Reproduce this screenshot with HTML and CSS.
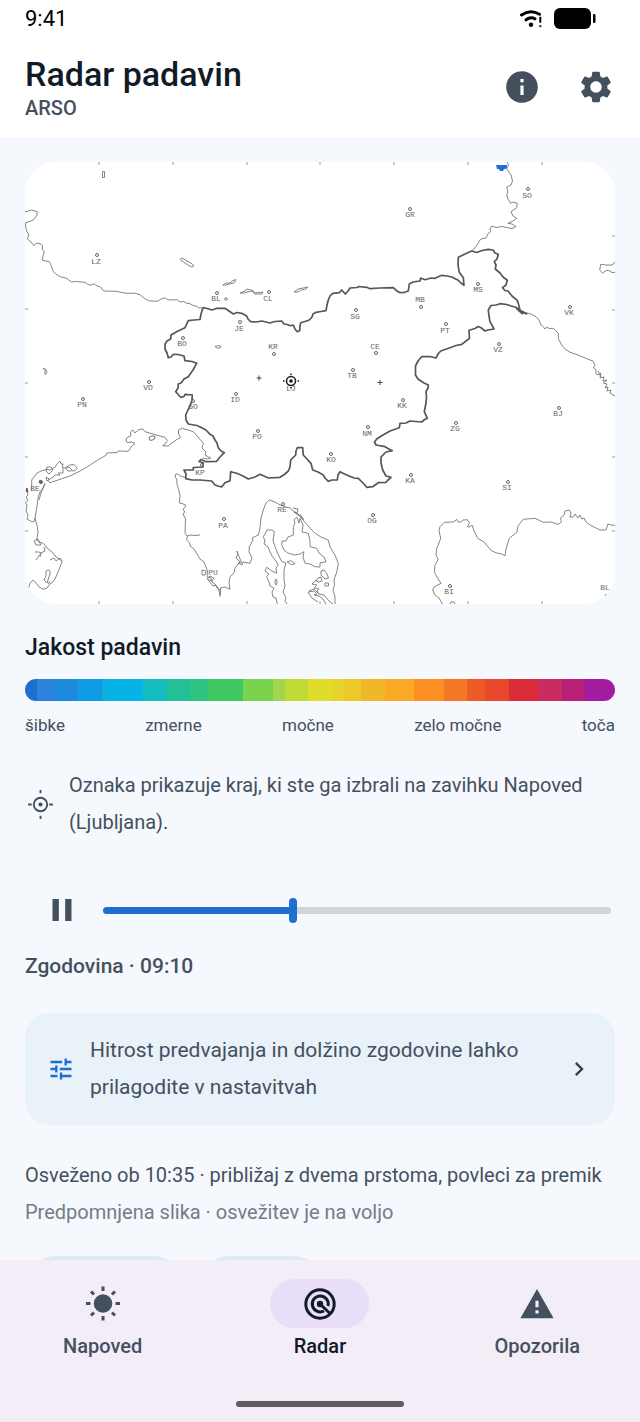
FILE: index.html
```html
<!DOCTYPE html>
<html lang="sl">
<head>
    <meta charset="UTF-8">
    <meta name="viewport" content="width=device-width, initial-scale=1.0">
    <title>Radar padavin</title>
    <link rel="stylesheet" href="styles.css">
</head>
<body>
    <div class="status-bar">
        <span class="clock">9:41</span>
        <div class="status-icons">
            <svg width="24" height="18" viewBox="0 0 24 18">
                <path d="M2.500 5Q11 -1 20.500 4.200" fill="none" stroke="#000" stroke-width="3" stroke-linecap="round"/>
                <path d="M7 9.800Q11.500 6.500 16 8.800" fill="none" stroke="#000" stroke-width="3" stroke-linecap="round"/>
                <circle cx="12" cy="14.800" r="2.200"/>
                <path d="M20 6.500h2.600v6.500h-2.600zM20 15h2.600v2.300h-2.600z" stroke="#fff" stroke-width="0.600"/>
            </svg>
            <svg width="42" height="21" viewBox="0 0 42 21">
                <rect width="37" height="21" rx="6"/>
                <rect x="39" y="6" width="2.500" height="9" rx="1"/>
            </svg>
        </div>
    </div>

    <header class="header">
        <div class="titles">
            <h1>Radar padavin</h1>
            <p>ARSO</p>
        </div>
        <button class="icon-button" aria-label="Informacije">
            <svg width="38" height="38" viewBox="0 0 24 24"><path d="M12 2C6.480 2 2 6.480 2 12s4.480 10 10 10 10-4.480 10-10S17.520 2 12 2zm1 15h-2v-6h2v6zm0-8h-2V7h2v2z"/></svg>
        </button>
        <button class="icon-button" aria-label="Nastavitve">
            <svg width="38" height="38" viewBox="0 0 24 24"><path d="M19.140 12.940c.04-.3.060-.61.060-.94 0-.32-.02-.64-.07-.94l2.030-1.580c.18-.14.230-.41.120-.61l-1.920-3.320c-.12-.22-.37-.29-.59-.22l-2.390.96c-.5-.38-1.030-.7-1.620-.94l-.36-2.540c-.04-.24-.24-.41-.48-.41h-3.840c-.24 0-.43.170-.47.410l-.36 2.540c-.59.240-1.130.570-1.620.940l-2.390-.96c-.22-.08-.47 0-.59.220L2.740 8.870c-.12.210-.08.470.120.610l2.030 1.580c-.05.3-.09.630-.09.940s.020.640.070.940l-2.030 1.580c-.18.140-.23.410-.12.610l1.920 3.320c.12.220.37.290.59.220l2.390-.96c.5.380 1.030.7 1.620.940l.36 2.540c.05.240.24.410.48.410h3.840c.24 0 .44-.17.47-.41l.36-2.540c.59-.24 1.130-.56 1.620-.94l2.390.96c.22.080.47 0 .59-.22l1.920-3.320c.12-.22.070-.47-.12-.61l-2.010-1.580zM12 15.600c-1.980 0-3.600-1.620-3.600-3.600s1.620-3.600 3.600-3.600 3.600 1.620 3.600 3.600-1.620 3.600-3.600 3.600z"/></svg>
        </button>
    </header>

    <main class="content">
        <svg class="map" viewBox="25 162 590 442" role="img" aria-label="Radarska slika">
            <rect class="paper" x="25" y="162" width="590" height="442"/>
            <path class="tick" d="M99 162v3M173 162v3M247 162v3M320 162v3M394 162v3M468 162v3M542 162v3M99 601v3M173 601v3M247 601v3M320 601v3M394 601v3M468 601v3M542 601v3M25 309h3M25 383h3M25 457h3M25 531h3M612 236h3M612 310h3M612 383h3M612 457h3M612 531h3"/>

            <!-- neighbouring borders -->
            <path class="thin" d="M25 212L31.700 210L37.300 211.700L37 215L34 219.300L31 221L25.700 222.700L25.500 226L26.700 231L29 235L27.300 239L31 242L34 245.700L36.700 243L41 244L42.700 245.700L42 249L44.300 251.700L43 256L42.300 260.300L49.300 261.700L51 265L53.300 271.700L56 274L60 276.700L66 278L71.700 282L76 281.500L85 282.300L88 284.500L91 285.300L94 283.700L97 286L100 286.700L103.700 291L116.700 291.300L124 293L130 293.300L134 293L140 294.700L144 298L148.300 300.700L157.300 301.300L161 299L165.300 297.700L167 299.500L170 300L177.300 299.700L180 302L184 301.500L186 303L190 303.700L193 305.500L196.700 306.300L199 308L203 307.700"/>
            <path class="thin" d="M507.300 162L508.500 165L506.700 169L509 172L511 175L512.500 181L511 185L506.700 187.300L508 192L506.700 195L508 199L510.500 203.300L513 202L517.300 203.300L516.700 207.700L511 211.700L513 216L516.700 218.300L513 221L508 223.300L512 224L516 226.700L512 228.500L506.700 227.500L502 226.500L496 227.500L491.700 226L490 229L490.500 232L488.300 233.300L486 238L480.700 239L477 245L472.300 251"/>
            <path class="thin" d="M526.700 313L531 314L536 316.700L539 320L541 325L543.300 326.700L545 329L547 327L549 328.500L553.300 328.300L558.300 333.300L558.500 339L561.700 345L565 349L570 352.300L578 355L590 360L593 361L595 365L593.500 368L596 370L595.700 373.300L598 375L601 373L600 378L604 377L603 381L607 380L603.300 383L607 384L605 388L608 387L607 391L611 390L610 393L615 396M601 377L598 371"/>
            <path class="thin" d="M615 261.700L612.700 265L606 265L600.700 264.300L599.700 270L602.700 273.300L605 271L608.300 270.300L612 272.500L615 272.300"/>
            <path class="thin" d="M442.300 604L439 598L435 595L432.700 590L434 587L441 583.300L437 577L434.300 571.700L435 565L438.300 559.300L436 555L436.700 548.300L439 543L440.700 538.300L439 531L440 526.700L444.300 522.300L453 522L455 521L456.700 519.300L458 522L461 522L463 520L467.300 519.700L469.500 523L467.500 526.700L470 527L472 525L474 531L477.700 538.300L484 542L491.700 551L497 553L502 554L505 556L506 549L509.300 538.300L512 536L516.700 532.700L518 526L523.300 519.300L535 518.300L543.300 522.300L551 522L558.300 524.300L561.500 522L560.500 518L564 515L565 511L569.300 510L571 513L570 517L573 517L575 514L578 518L580 515L581.700 519L584 518L586 522L590 525L600 530L606 530L608 524L611 525L615 525.300"/>
            <path class="thin" d="M450 604l1-2h3l1 2"/>

            <!-- northern Adriatic -->
            <path class="thin" d="M50 482.700L61 479L70 476L78 472L86.700 467.300L96 461L106 455.300L107 453L117 452.500L118 451L128.300 451.300L131 447L135 443.300L131 442L127.300 442.700L126 440L127 437.500L130.700 436L130.700 431.700L133 430L135 433L139 429.500L143 429L145 431.700L153 434L160 436L165 437.300L167.300 440.700L165 444L162.700 445.700L168 446L172 443L176 440L180.700 437.500L178.500 434L178.500 430L182.300 428.300L188 430L193.300 431.700L198 437L203.300 443.300L202 448L206 452L205 455L210.700 458L207 459L202.700 458"/>
            <ellipse class="thin" cx="152" cy="438" rx="3" ry="2" transform="rotate(-25 152 438)"/>
            <path class="thin" d="M31.700 490L31.700 480L36.700 473.300L41 471L46.700 469.300L50 470L55 467.300L57 464L60 461L61 464L63.300 464L62 467L65 468L70 465L74 464.500L77.300 468.300L75 470.700L68 471L66 468.500L69 467L72 470M63 468L63 473L58 473L60 475L55 475L52 478L48 480L50 483M47 467l4 0 2 3-4 4-3-3zM46 477l3 2-2 2z"/>
            <path class="thin" d="M45 483.300L43 488L40 492L38.300 496.700L37 506L35.500 515L35 518.300L34 521.700L31.700 521.700L27 519L28 515L26 511L27 505L25.500 503L28 500L26 497L28 495L27 491M45 484L41 493L39 500M35 518L37.300 526.700L38 532L36.700 540L39 542L43.300 543.300L47 548L51.700 551.700L56 557L62.300 561L60 567L58 572L55 579L50.700 584M28.300 589.300L30 583L33.300 580L36 583L39 587L43.300 589.300L47 588L50.700 583M35 552l4 0 2 1-5 7M34 541l4-2 3 6-5 0zM44 547l1 4-4 2-1 4M46 571q5-3 4 3l-3 9-3-3 2-4zM48 584l2-3M50 560l4-2 2 3 4-3 2 3"/>
            <path class="bold" d="M40 480l2 1.500-1 2-2-1zM27 488l1 4-2-1z"/>

            <!-- Istria and the islands -->
            <path class="thin" d="M185.700 477.500L180 476L178 474L175.700 474.300L175 477L176.700 479L177 484L178.300 488.300L180 495L179.500 503L185 504.500L185.500 507L183 509L184.700 512L183 514L185.500 519L185 533.300L187.500 536.700L186.500 540L190 543.300L190 546L194 549L197 554L200 559L204 562L206 567L207.500 571L207 576.700L211 578L212 582L215 584L217 588L220 590M187 536L191 535L195 535.500L200 535M208.300 580L213 586L216 585L219 590L220 597M220.500 588V595M220 588.300L225 587L230 589.300L229 583L230 576.700L234 573L235 568L240 561.700L236 558L238 554L236.700 551L241.700 562.700L238 563L242 565L243 562L250 563.300L252 558L249 552L249.300 546.700L253 540L252 538L258.300 535L260 528L261 518L263.300 510L266 503L269.300 500L275 502L280 505L286 507L290 508L292 510L297.300 513.300L303 520L309 527L315 533.300L321 537L328.300 540L330 547L335 555L338.300 563.300L337 571L334 580L334.500 585L333 590L335 597L335 604"/>
            <path class="thin" d="M202 570l4 1-1 4-3 0zM207 579l3-3 4 2-2 3zM293 508l5 1-1 4-3-1 5 4"/>
            <path class="thin" d="M271.700 530L267 530L265 534L263.300 536.700L265 541L264 544L268 547L270 551.700L272 556L276 561L278.300 565L276 568L276.700 573.300L272 571L266.700 567.300L265 571L269 574L266.700 576.700L269 582L270 586L274 588.300L272 592L273 597L276 598L277.300 604M271.700 530L274.500 531.700L273 540L275 546.700L278 554L281.700 561.700L286 563L284 570L284 580L285 586L283 592L286 598L285 601L287.300 604"/>
            <path class="thin" d="M287 562q5-3 8 2-3 2-8-2z"/>
            <ellipse class="thin" cx="276" cy="582" rx="1" ry="3"/>
            <path class="thin" d="M296.700 517L294 520L295 523L293.300 526.700L293.300 535L288 537L286 541L282 541L281.700 545L284 550L287.300 552.700L294 555L300 554L304 551.700L303 557L305 563.300L310 564L315 566.700L320 567L320 563L326 561.700L324 557L319 553L316.700 548.300L310 546.700L310 541L308.300 533.300L302 532L303 525L300 518.300L299 523L296.700 517M297 513L303 519M300 514L304 520"/>
            <path class="thin" d="M321 571l3-1 3 4 1.500 4-3.500 1-4-4zM325 583h3.500v3h-3.500zM318 578l3-1 1 4-3 1-3-1zM316 580l-4 4 5 1-3 3 5 1-2 2 2 3M308 592l6-1 3 3-3 1 5 1 4 3 3 5M309 591l5-2 5 5 5 1 5 6 4 3M308 592l4 6 6 4"/>

            <!-- lakes -->
            <path class="thin" d="M180 259.500L182 258L187 261L191 263L194 266L192 267L187 264.500zM222.700 285L226 283L230 283L232 281L236 279.500L234 283L229 284L226 285zM240 293L245 291L247 289L253 290.500L254 293L263 292L262 294L255 294L252 291L247 292L244 293zM294 292L298 289L303 288L308 287L306 289L301 290L298 292zM215 346.500l4-1 2 1-1 1.500-3 0zM102.500 171.500l2 0v6l-2 0zM43 368l3 1.500 1 3-2 2v-4z"/>
            <circle class="thin" cx="226" cy="299" r="1.300"/>

            <!-- national border -->
            <path class="border" d="M203 307.700L207 308.500L212 310L216.700 308.300L225 308.300L229 311L233.300 314L237 312.500L241.700 313.300L246.700 316L248 319L250.700 321.700L256 322L261.700 321L266 322L270 323L275 321.500L281.700 321L284 324L287 324.500L290.700 325.700L293.300 325L295 329L297.300 331.700L299.700 330.700L300 326L300.700 322.700L305 321.500L309.300 320L312 317L313 314L316 312.300L321 311.500L326 310.700L327 305L328.300 300L330 296L332.700 293.300L339.300 292.700L341.700 290L345.300 294L348 291L350 288L357 287.500L359 286.500L366.700 287.300L370 288.700L380 288L393.300 287.700L397 291L400 292.700L404 292.500L408.300 291L409.300 284L413 282L420 281L420.700 278L425 279.700L431 278L435 278.300L441.700 275.300L447 276L451.700 277L458.300 280.300L461 283L464 285.300L463.300 277.700L459.300 272.300L458 265L458.300 257.300L465 254L471.700 251L476.700 252.500L482 250.500L488.300 249.300L493 250L495 253L498.300 254.300L497 259L494.300 261.700L496 265L495.300 269L500 273L503.300 277.300L507.300 280.300L506 285L502.500 287.700L505 290.500L508 291L512 296L517.300 300.300L519 306L520 310.300L526.700 313.700L522 312L516 307.300L511 306L506.700 304.500L500 303.700L496 305L491 305.500L488.300 310L489 316L490 321.700L494 329L488 330L485 331L481 327.700L478 326.500L475 328.500L469 330.300L469.500 338.300L466 341L461.700 344.300L456 345.500L450 347.700L440.700 351L438 354L436 358L430 356.500L421.700 356.700L418 361L415.500 366L415.500 375L418 379L424 383L428.300 385L428 388L426 391.700L426.500 397L426 403L424.300 411.700L427.300 418.300L424 420L421.700 422L410 421L406 423L400 423.300L399.300 427.700L390 431L383 435L376.700 439L374.500 442L376 445L385 446.700L388 448.500L392.300 450.700L386 452L381 457L381 463L382.700 470L386 476L391 477.300L388 480L386 482.300L378.300 482.700L372.700 486.700L366.700 487.300L364 484L358.300 478.300L354 478L346.700 475L340 471.700L338 475L337.300 480L332 480L328.300 481.300L325 478L323.300 475L318 472L312.700 470L311 463.300L306 458L303.300 455L302.700 447.700L297.300 447.700L296 451L295.700 455L290.700 460L290 467L288.300 471L285 474L280 477.300L268.300 478L260 474.300L255 477L248.300 479L243 476L236.700 473.300L230.700 471.700L230 480.700L225 482.700L221.700 487L218 486L215 485L211.700 481L200 480L192 480L185.700 478.700L186 474L184 470L193.300 470L193.300 467.500L203 467L203.300 463L199 461.500L201 459.500L206 461.700L216.700 461.300L220 457L224.300 452.700L221 451L218.300 447.700L217 443L215 440L213 436L210 434.300L206 430L201.700 427.700L197 425.500L188.300 424L186 420L185.700 415L188 410L190 406L192 400L192.300 395L185 394.300L184 396.500L180.700 397.300L175.700 391.700L178 388L178.300 384L181 383L184 379L188.300 376.700L193 370L196.700 363.300L192 361.500L185 360.700L184 356L178 354.500L173.300 354.300L171 357L168.300 357.700L167 353L165 349L165 344.300L167 341L170.700 339L171 335L178 331L185 327.700L188.300 320.700L194 320L200 319.500L201 314L203 307.700"/>
            <path class="border" d="M516 308L520 311L527 314M518 310L523 314"/>

            <path class="rain" d="M496 165h11v2l-1 2h-2l-1 2h-3l-1-2h-2z"/>

            <!-- places -->
            <g class="dots">
                <circle cx="410" cy="209" r="1.500"/><circle cx="528" cy="189" r="1.500"/><circle cx="97" cy="255" r="1.500"/><circle cx="217" cy="293" r="1.500"/><circle cx="269" cy="292" r="1.500"/>
                <circle cx="240" cy="322" r="1.500"/><circle cx="356" cy="310" r="1.500"/><circle cx="478" cy="284" r="1.500"/><circle cx="570" cy="307" r="1.500"/><circle cx="183" cy="338" r="1.500"/>
                <circle cx="274" cy="354" r="1.500"/><circle cx="376" cy="353" r="1.500"/><circle cx="421" cy="307" r="1.500"/><circle cx="446" cy="324" r="1.500"/><circle cx="499" cy="344" r="1.500"/>
                <circle cx="353" cy="370" r="1.500"/><circle cx="236" cy="394" r="1.500"/><circle cx="403" cy="400" r="1.500"/><circle cx="83" cy="399" r="1.500"/><circle cx="149" cy="382" r="1.500"/>
                <circle cx="193" cy="401" r="1.500"/><circle cx="368" cy="427" r="1.500"/><circle cx="258" cy="431" r="1.500"/><circle cx="331" cy="454" r="1.500"/><circle cx="202" cy="465" r="1.500"/>
                <circle cx="456" cy="423" r="1.500"/><circle cx="559" cy="408" r="1.500"/><circle cx="508" cy="482" r="1.500"/><circle cx="411" cy="475" r="1.500"/><circle cx="373" cy="515" r="1.500"/>
                <circle cx="224" cy="519" r="1.500"/><circle cx="283" cy="504" r="1.500"/><circle cx="450" cy="586" r="1.500"/><circle cx="41" cy="482" r="1.500"/><path d="M605 596q0-2 2-1.500"/>
            </g>
            <g class="places">
                <text x="410" y="217">GR</text><text x="527" y="198">SO</text><text x="96" y="264">LZ</text><text x="216" y="301">BL</text><text x="268" y="301">CL</text>
                <text x="239" y="331">JE</text><text x="355" y="319">SG</text><text x="478" y="292">MS</text><text x="569" y="315">VK</text><text x="182" y="346">BO</text>
                <text x="273" y="349">KR</text><text x="375" y="349">CE</text><text x="420" y="302">MB</text><text x="445" y="333">PT</text><text x="498" y="352">VZ</text>
                <text x="352" y="378">TB</text><text x="235" y="402">ID</text><text x="402" y="408">KK</text><text x="82" y="407">PN</text><text x="148" y="390">VD</text>
                <text x="193" y="409">GO</text><text x="291" y="391">LJ</text><text x="367" y="436">NM</text><text x="257" y="439">PO</text><text x="331" y="462">KO</text>
                <text x="200" y="475">KP</text><text x="455" y="431">ZG</text><text x="558" y="416">BJ</text><text x="507" y="490">SI</text><text x="410" y="483">KA</text>
                <text x="372" y="523">OG</text><text x="223" y="528">PA</text><text x="282" y="512">RE</text><text x="213" y="575">PU</text><text x="449" y="594">BI</text>
                <text x="605" y="590">BL</text><text x="35" y="491">BE</text>
            </g>
            <path class="cross" d="M259 375.500v5M256.500 378h5M380 380v5M377.500 382.500h5"/>
            <g class="marker">
                <circle cx="291" cy="381" r="4.500"/>
                <circle class="marker-dot" cx="291" cy="381" r="1.800"/>
                <path d="M291 373.500v1.500M291 387v1.500M283 381h1.500M297.500 381h1.500"/>
            </g>
        </svg>

        <section class="legend">
            <h2>Jakost padavin</h2>
            <div class="scale"></div>
            <div class="scale-labels">
                <span>šibke</span>
                <span>zmerne</span>
                <span>močne</span>
                <span>zelo močne</span>
                <span>toča</span>
            </div>
        </section>

        <div class="note">
            <svg width="31" height="31" viewBox="0 0 30 30" fill="none" stroke="#44505e" stroke-width="1.800">
                <circle cx="15" cy="15" r="6.500"/>
                <circle cx="15" cy="15" r="2" fill="#44505e" stroke="none"/>
                <path d="M15 1v3M15 26v3M3 15h3.500M23.500 15h3.500"/>
            </svg>
            <p>Oznaka prikazuje kraj, ki ste ga izbrali na zavihku Napoved (Ljubljana).</p>
        </div>

        <div class="player">
            <button class="icon-button" aria-label="Premor">
                <svg width="38" height="38" viewBox="0 0 24 24"><path d="M6 19h4V5H6v14zm8-14v14h4V5h-4z"/></svg>
            </button>
            <input class="timeline" type="range" min="0" max="51" value="19" aria-label="Čas slike">
        </div>
        <p class="frame-time">Zgodovina · 09:10</p>

        <button class="hint">
            <svg width="28" height="28" viewBox="0 0 24 24" fill="#1d6fd2"><path d="M3 17v2h6v-2H3zM3 5v2h10V5H3zm10 16v-2h8v-2h-8v-2h-2v6h2zM7 9v2H3v2h4v2h2V9H7zm14 4v-2H11v2h10zm-6-4h2V7h4V5h-4V3h-2v6z"/></svg>
            <span>Hitrost predvajanja in dolžino zgodovine lahko prilagodite v nastavitvah</span>
            <svg width="28" height="28" viewBox="0 0 24 24" fill="#35414e"><path d="M10 6L8.590 7.410 13.170 12l-4.580 4.590L10 18l6-6z"/></svg>
        </button>

        <div class="info">
            <p>Osveženo ob 10:35 · približaj z dvema prstoma, povleci za premik</p>
            <p class="cached">Predpomnjena slika · osvežitev je na voljo</p>
        </div>

        <div class="chips">
            <button class="chip chip-wide" aria-label="Osveži"></button>
            <button class="chip" aria-label="Deli"></button>
        </div>
    </main>

    <nav class="tabs">
        <a class="tab" href="#napoved">
            <span class="tab-icon">
                <svg width="38" height="38" viewBox="0 0 38 38" fill="#44505e">
                    <circle cx="19" cy="18.500" r="9.300"/>
                    <path d="M19 1.500v4.500M19 31v4.500M2 18.500h4.500M31.500 18.500h4.500M7 6.500l3 3M28 27.500l3 3M31 6.500l-3 3M10 27.500l-3 3" stroke="#44505e" stroke-width="3"/>
                </svg>
            </span>
            Napoved
        </a>
        <a class="tab active" href="#radar">
            <span class="tab-icon">
                <svg width="38" height="38" viewBox="0 0 38 38" fill="none" stroke="#111b27" stroke-width="3">
                    <circle cx="19" cy="19" r="14.200"/>
                    <path d="M23 26a8 8 0 1 1 4-5"/>
                    <circle cx="19" cy="19" r="3.200" fill="#111b27" stroke="none"/>
                    <path d="M19 19l10 9.500"/>
                </svg>
            </span>
            Radar
        </a>
        <a class="tab" href="#opozorila">
            <span class="tab-icon">
                <svg width="38" height="38" viewBox="0 0 24 24" fill="#44505e"><path d="M1.500 21h21L12 2.500 1.500 21zm11.500-3h-2v-2h2v2zm0-4h-2v-4h2v4z"/></svg>
            </span>
            Opozorila
        </a>
        <div class="home-bar"></div>
    </nav>
</body>
</html>
```
FILE: styles.css
```css
* {
    box-sizing: border-box;
}
body {
    margin: 0;
    height: 100vh;
    display: flex;
    flex-direction: column;
    background: #f5f8fd;
    color: #44505e;
    font-family: Roboto, "Liberation Sans", sans-serif;
    font-size: 20px;
    line-height: 37px;
    overflow: hidden;
}
h1, h2, p {
    margin: 0;
}
button {
    border: none;
    padding: 0;
    font: inherit;
    color: inherit;
    cursor: pointer;
}
svg {
    display: block;
    flex-shrink: 0;
}

/* Status bar and header */
.status-bar {
    display: flex;
    justify-content: space-between;
    align-items: center;
    height: 37px;
    padding: 0 44px 0 25px;
    background: #fff;
}
.clock {
    color: #000;
    font-size: 22px;
}
.status-icons {
    display: flex;
    align-items: center;
    gap: 11px;
}
.header {
    display: flex;
    align-items: center;
    gap: 24px;
    height: 100px;
    padding: 0 19px 0 25px;
    background: #fff;
}
.titles {
    flex: 1;
}
.titles h1 {
    color: #111b27;
    font-size: 34px;
    font-weight: 500;
    line-height: 38px;
}
.titles p {
    margin-top: 4px;
    font-size: 20px;
    font-weight: 500;
    line-height: 23px;
}
.icon-button {
    display: flex;
    align-items: center;
    justify-content: center;
    width: 50px;
    height: 50px;
    background: none;
}
.icon-button svg {
    fill: #44505e;
}

/* Scrolling content */
.content {
    flex: 1;
    min-height: 0;
    overflow: hidden;
    padding: 25px 25px 0;
}

/* Radar map */
.map {
    width: 100%;
    height: auto;
    border-radius: 31px;
}
.paper {
    fill: #fff;
}
.tick {
    fill: none;
    stroke: #999;
}
.thin {
    fill: none;
    stroke: #777;
    stroke-width: 0.9;
}
.bold {
    fill: #777;
    stroke: #555;
}
.border {
    fill: none;
    stroke: #56565a;
    stroke-width: 1.7;
    stroke-linejoin: round;
}
.rain {
    fill: #1d6fd2;
}
.dots {
    fill: none;
    stroke: #666;
}
.places {
    fill: #666;
    font-family: "Liberation Mono", monospace;
    font-size: 8px;
    text-anchor: middle;
}
.cross {
    fill: none;
    stroke: #444;
}
.marker {
    fill: none;
    stroke: #111b27;
    stroke-width: 1.5;
}
.marker-dot {
    fill: #111b27;
    stroke: none;
}

/* Legend */
.legend {
    padding-top: 25px;
}
.legend h2 {
    color: #111b27;
    font-size: 23px;
    font-weight: 500;
}
.scale {
    height: 22px;
    margin-top: 13px;
    border-radius: 11px;
    background: linear-gradient(90deg,
        #1f6fd0 0 2%, #2d82dc 0 5%, #1c8bdc 0 9%, #109ce4 0 13%, #0dafe0 0 14%,
        #05b4e6 0 20%, #15bcc0 0 24%, #22c096 0 28%, #2ec380 0 31%, #40c962 0 37%,
        #7ad34c 0 42%, #a2d452 0 44%, #c0da38 0 48%, #e0dc2c 0 52%, #e8d22c 0 54%,
        #ecc828 0 57%, #f0b828 0 61%, #faaa24 0 66%, #fc9024 0 71%, #f47826 0 75%,
        #ee5a28 0 78%, #e8482c 0 82%, #dc2c38 0 87%, #c82c60 0 91%, #b82078 0 95%,
        #a21ca0 0);
}
.scale-labels {
    display: flex;
    justify-content: space-between;
    margin-top: 12px;
    font-size: 17px;
    line-height: 25px;
}

.note {
    display: flex;
    align-items: center;
    gap: 13px;
    margin-top: 29px;
}

/* Playback */
.player {
    display: flex;
    align-items: center;
    gap: 16px;
    margin-top: 44px;
    padding: 0 4px 0 12px;
}
.timeline {
    flex: 1;
    min-width: 0;
    height: 25px;
    margin: 0;
    appearance: none;
    background: none;
}
.timeline::-webkit-slider-runnable-track {
    height: 7px;
    border-radius: 4px;
    background: linear-gradient(90deg, #1d6fd2 37%, #d1d4d9 0);
}
.timeline::-webkit-slider-thumb {
    appearance: none;
    width: 8px;
    height: 25px;
    margin-top: -9px;
    border-radius: 4px;
    background: #1d6fd2;
}
.frame-time {
    margin-top: 13px;
    font-size: 21px;
    font-weight: 500;
}

/* Settings hint */
.hint {
    display: flex;
    align-items: center;
    gap: 15px;
    width: 100%;
    margin-top: 28px;
    padding: 19px 22px;
    border-radius: 25px;
    background: #e9f1f9;
    font-size: 21px;
    text-align: left;
}
.hint span {
    flex: 1;
}

.info {
    margin-top: 32px;
}
.cached {
    color: #727d88;
}

.chips {
    display: flex;
    gap: 13px;
    margin-top: 25px;
}
.chip {
    width: 127px;
    height: 64px;
    border-radius: 32px;
    background: #e0e9f2;
}
.chip-wide {
    width: 160px;
}

/* Bottom tabs */
.tabs {
    display: grid;
    grid-template-columns: repeat(3, 1fr);
    align-content: start;
    column-gap: 12px;
    height: 162px;
    padding-top: 19px;
    background: #f3edf7;
}
.tab {
    display: flex;
    flex-direction: column;
    align-items: center;
    color: #44505e;
    font-size: 20px;
    font-weight: 500;
    text-decoration: none;
}
.tab-icon {
    display: flex;
    align-items: center;
    justify-content: center;
    width: 99px;
    height: 49px;
    border-radius: 25px;
}
.tab.active {
    color: #111b27;
}
.tab.active .tab-icon {
    background: #e8def8;
}
.home-bar {
    grid-column: 1 / -1;
    width: 168px;
    height: 6px;
    margin: 36px auto 0;
    border-radius: 3px;
    background: #605d62;
}
```
